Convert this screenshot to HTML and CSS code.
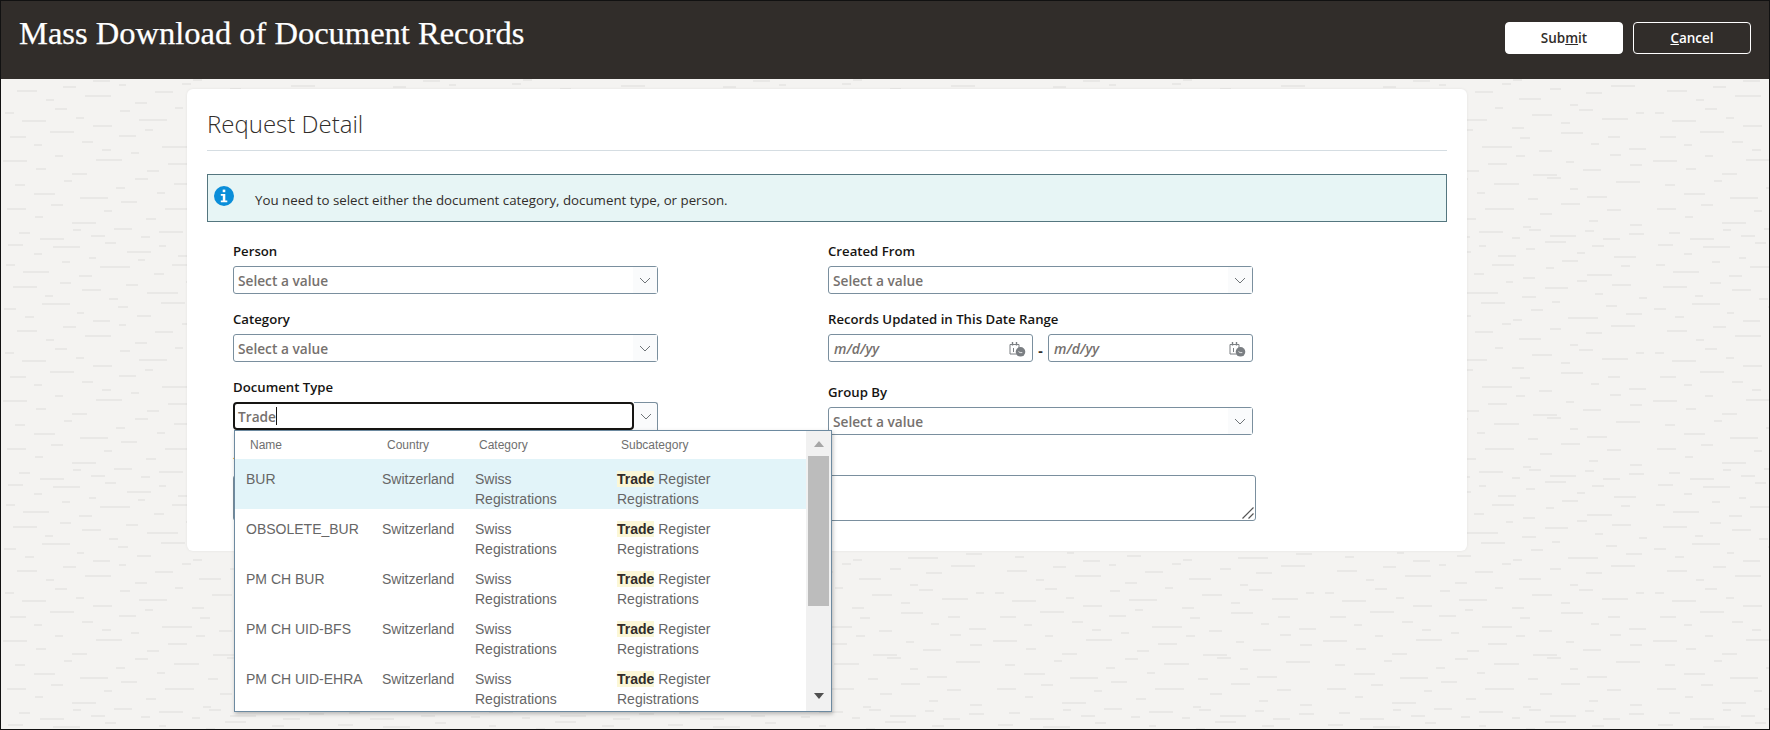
FILE: index.html
```html
<!DOCTYPE html>
<html lang="en">
<head>
<meta charset="utf-8">
<title>Mass Download of Document Records</title>
<link rel="stylesheet" href="styles.css">
</head>
<body>
<div class="frame">
  <header class="topbar">
    <h1 class="title">Mass Download of Document Records</h1>
    <div class="actions">
      <button class="btn btn-primary">Sub<u>m</u>it</button>
      <button class="btn btn-ghost"><u>C</u>ancel</button>
    </div>
  </header>
  <main class="stage">
    <section class="card">
      <h2 class="card-title">Request Detail</h2>
      <div class="notice">
        <svg class="notice-icon" viewBox="0 0 20 20" width="20" height="20"><circle cx="10" cy="10" r="10" fill="#0a8ed9"/><rect x="8.700" y="3.600" width="2.600" height="2.600" fill="#fff"/><path d="M6.800 8h4.500v6.400h2v1.800H6.800v-1.800h2V9.800h-2z" fill="#fff"/></svg>
        <span class="notice-text">You need to select either the document category, document type, or person.</span>
      </div>
      <div class="form">
        <div class="col">
          <div class="field">
            <label class="label">Person</label>
            <div class="select"><span class="placeholder">Select a value</span><span class="chev"><svg viewBox="0 0 12 7" width="12" height="7"><path d="M1 1l5 5 5-5" fill="none" stroke="#6f7478"/></svg></span></div>
          </div>
          <div class="field">
            <label class="label">Category</label>
            <div class="select"><span class="placeholder">Select a value</span><span class="chev"><svg viewBox="0 0 12 7" width="12" height="7"><path d="M1 1l5 5 5-5" fill="none" stroke="#6f7478"/></svg></span></div>
          </div>
          <div class="field">
            <label class="label">Document Type</label>
            <div class="combo">
              <div class="combo-input"><span class="typed">Trade</span><span class="caret"></span></div>
              <span class="combo-chev"><svg viewBox="0 0 12 7" width="12" height="7"><path d="M1 1l5 5 5-5" fill="none" stroke="#6f7478"/></svg></span>
              <div class="dropdown">
                <div class="list">
                  <div class="row head"><span class="c1">Name</span><span class="c2">Country</span><span class="c3">Category</span><span class="c4">Subcategory</span></div>
                  <div class="row item active"><span class="c1">BUR</span><span class="c2">Switzerland</span><span class="c3">Swiss Registrations</span><span class="c4"><b class="hit">Trade</b> Register Registrations</span></div>
                  <div class="row item"><span class="c1">OBSOLETE_BUR</span><span class="c2">Switzerland</span><span class="c3">Swiss Registrations</span><span class="c4"><b class="hit">Trade</b> Register Registrations</span></div>
                  <div class="row item"><span class="c1">PM CH BUR</span><span class="c2">Switzerland</span><span class="c3">Swiss Registrations</span><span class="c4"><b class="hit">Trade</b> Register Registrations</span></div>
                  <div class="row item"><span class="c1">PM CH UID-BFS</span><span class="c2">Switzerland</span><span class="c3">Swiss Registrations</span><span class="c4"><b class="hit">Trade</b> Register Registrations</span></div>
                  <div class="row item"><span class="c1">PM CH UID-EHRA</span><span class="c2">Switzerland</span><span class="c3">Swiss Registrations</span><span class="c4"><b class="hit">Trade</b> Register Registrations</span></div>
                </div>
                <div class="scrollbar">
                  <span class="arrow-up"></span>
                  <span class="thumb"></span>
                  <span class="arrow-down"></span>
                </div>
              </div>
            </div>
          </div>
        </div>
        <div class="col">
          <div class="field">
            <label class="label">Created From</label>
            <div class="select"><span class="placeholder">Select a value</span><span class="chev"><svg viewBox="0 0 12 7" width="12" height="7"><path d="M1 1l5 5 5-5" fill="none" stroke="#6f7478"/></svg></span></div>
          </div>
          <div class="field">
            <label class="label">Records Updated in This Date Range</label>
            <div class="dates">
              <div class="date"><span class="date-ph">m/d/yy</span>
                <svg class="cal" viewBox="0 0 17 16" width="17" height="16"><path d="M1 3.500h9v9.500H1z" fill="none" stroke="#7b7f83"/><path d="M3.500 1v3.500M7.500 1v3.500" stroke="#7b7f83" stroke-width="1.400"/><path d="M4.500 7v4" stroke="#7b7f83"/><circle cx="11.500" cy="10.800" r="4.800" fill="#7b7f83"/><path d="M9.500 10.600l1.600 1h2.200" fill="none" stroke="#fff" stroke-width=".8"/></svg>
              </div>
              <span class="dash">-</span>
              <div class="date"><span class="date-ph">m/d/yy</span>
                <svg class="cal" viewBox="0 0 17 16" width="17" height="16"><path d="M1 3.500h9v9.500H1z" fill="none" stroke="#7b7f83"/><path d="M3.500 1v3.500M7.500 1v3.500" stroke="#7b7f83" stroke-width="1.400"/><path d="M4.500 7v4" stroke="#7b7f83"/><circle cx="11.500" cy="10.800" r="4.800" fill="#7b7f83"/><path d="M9.500 10.600l1.600 1h2.200" fill="none" stroke="#fff" stroke-width=".8"/></svg>
              </div>
            </div>
          </div>
          <div class="field field-group">
            <label class="label">Group By</label>
            <div class="select"><span class="placeholder">Select a value</span><span class="chev"><svg viewBox="0 0 12 7" width="12" height="7"><path d="M1 1l5 5 5-5" fill="none" stroke="#6f7478"/></svg></span></div>
          </div>
        </div>
        <div class="field field-wide">
          <label class="label"><span class="req">*</span> Reason</label>
          <div class="textarea">
            <svg class="grip" viewBox="0 0 12 12" width="12" height="12"><path d="M.5 11.500L11.500.5M6.500 11.500L11.500 6.500" stroke="#555" stroke-width="1.200"/></svg>
          </div>
        </div>
      </div>
    </section>
  </main>
</div>
</body>
</html>
```

FILE: styles.css
```css
* { box-sizing: border-box; }
html, body { margin: 0; height: 100%; }
body {
  font-family: "Open Sans", "Noto Sans", sans-serif;
  background: #000;
  overflow: hidden;
}
.frame {
  width: 1770px;
  height: 730px;
  border: 1px solid #111;
  display: flex;
  flex-direction: column;
  background-color: #f4f3f1;
  background-image: url("data:image/svg+xml,%3Csvg xmlns='http://www.w3.org/2000/svg' width='330' height='240'%3E%3Cdefs%3E%3Cfilter id='b'%3E%3CfeGaussianBlur stdDeviation='.45'/%3E%3C/filter%3E%3C/defs%3E%3Cpath filter='url(%23b)' fill='none' stroke='%23e6e5e2' stroke-width='1.500' d='M7 4h15M33 13h8M52 6h27M88 17h7M104 2h11M126 11h24M158 5h7M177 15h18M205 8h9M224 1h21M256 12h8M271 5h12M293 16h22M5 24h9M22 31h26M61 21h8M78 35h13M99 26h30M137 19h7M153 33h10M171 24h22M202 37h12M225 27h8M241 20h16M266 34h25M300 25h9M12 46h24M44 55h8M59 42h11M81 49h19M108 58h9M125 44h12M146 52h31M185 41h7M201 56h14M224 47h23M256 40h10M274 53h8M291 44h19M318 57h8M3 68h12M24 76h9M41 63h28M76 72h7M92 80h17M117 66h10M136 75h14M160 62h24M192 79h9M210 69h12M231 61h8M247 77h30M285 65h11M305 73h16M16 90h20M45 99h8M62 86h13M84 95h26M118 84h7M134 102h12M154 91h18M181 83h9M198 98h22M229 88h11M249 104h8M265 92h16M290 85h24M4 112h9M21 120h24M54 108h12M75 117h8M92 125h19M119 110h10M138 119h28M174 107h8M191 127h12M211 114h20M240 122h9M258 109h14M281 118h26M315 112h8M9 136h16M33 144h8M49 131h24M81 141h11M101 149h9M118 135h17M144 129h8M161 146h30M199 137h10M218 150h13M240 132h22M270 143h8M287 136h12M308 148h17M2 160h24M35 168h10M54 155h8M71 173h15M95 159h26M130 152h8M146 170h12M167 163h19M195 155h9M212 174h24M245 161h8M262 169h18M289 154h11M309 164h12M14 184h10M33 193h21M63 180h8M79 197h28M115 187h9M134 178h13M156 192h8M173 183h25M207 198h10M226 177h14M249 188h8M266 196h20M295 181h24M6 208h19M34 216h8M50 204h12M71 222h24M103 210h8M120 201h16M145 218h10M164 208h29M202 226h8M219 213h12M240 203h19M268 220h9M286 209h14M309 224h12M18 232h11M39 238h24M72 229h8M90 235h14M113 228h18M140 236h9M158 231h24M191 237h8M208 229h12M229 235h26M264 230h9M282 238h17M308 233h15'/%3E%3C/svg%3E");
}
.topbar {
  height: 78px;
  flex: none;
  background: #312d2a;
  display: flex;
  justify-content: space-between;
  padding: 21px 18px 0 18px;
}
.title {
  margin: 0;
  font-family: "Liberation Serif", serif;
  font-weight: 400;
  font-size: 32.500px;
  line-height: 22px;
  color: #fff;
  -webkit-text-stroke: .25px #fff;
}
.actions { display: flex; gap: 10px; height: 32px; }
.btn {
  width: 118px;
  height: 32px;
  border-radius: 4px;
  font: 550 13.500px "Open Sans", sans-serif;
  padding: 0;
}
.btn-primary { background: #fff; border: 1px solid #fff; color: #312d2a; }
.btn-ghost { background: transparent; border: 1px solid #fff; color: #fff; }
.stage { flex: 1; min-height: 0; padding: 10px 0 0 186px; }
.card {
  width: 1280px;
  height: 462px;
  background: #fff;
  border-radius: 6px;
  box-shadow: 0 0 3px rgba(0,0,0,.07);
  padding: 20px 20px 0;
}
.card-title {
  margin: 0;
  height: 42px;
  font-size: 24px;
  font-weight: 300;
  line-height: 29px;
  color: #312d2a;
  border-bottom: 1px solid #d5dde2;
}
.notice {
  margin-top: 23px;
  height: 48px;
  background: #e7f5f5;
  border: 1px solid #54767f;
  display: flex;
  padding-left: 6px;
  font-size: 13.300px;
  line-height: 20px;
  color: #312d2a;
}
.notice-icon { margin: 11px 21px 0 0; flex: none; }
.notice-text { margin-top: 15px; }
.form {
  display: grid;
  grid-template-columns: 425px 425px;
  column-gap: 170px;
  padding: 16px 0 0 26px;
  align-items: start;
}
.col { display: flex; flex-direction: column; }
.field { display: flex; flex-direction: column; }
.col .field + .field { margin-top: 12px; }
.col .field-group { margin-top: 17px !important; }
.label {
  font-size: 13.200px;
  font-weight: 600;
  line-height: 20px;
  height: 28px;
  padding-top: 3px;
  color: #161513;
}
.select, .date, .textarea {
  border: 1px solid #7a8f9e;
  border-radius: 3px;
  height: 28px;
  background: #fff;
}
.select { display: flex; align-items: center; padding-left: 4px; }
.placeholder, .typed { font-size: 13.700px; font-weight: 600; color: #76716e; flex: 1; }
.typed { flex: none; }
.chev {
  width: 24px;
  height: 26px;
  background: #fafbfc;
  display: flex;
  align-items: center;
  justify-content: center;
}
.combo { display: flex; height: 28px; position: relative; }
.combo-input {
  width: 401px;
  height: 28px;
  border: 2px solid #161513;
  border-radius: 4px;
  display: flex;
  align-items: center;
  padding-left: 3px;
}
.caret { width: 1px; height: 18px; background: #161513; }
.combo-chev {
  width: 24px;
  height: 28px;
  border: 1px solid #7a8f9e;
  border-left: 0;
  border-bottom: 0;
  border-radius: 0 3px 0 0;
  background: #fafbfc;
  display: flex;
  align-items: center;
  justify-content: center;
}
.dates { display: flex; align-items: center; }
.date {
  width: 205px;
  display: flex;
  align-items: center;
  justify-content: space-between;
  padding: 0 6px 0 5px;
}
.date-ph { font-size: 14px; font-style: italic; font-weight: 600; color: #76716e; }
.cal { margin-top: 2px; }
.dash { width: 15px; text-align: center; font-weight: 700; font-size: 14px; color: #312d2a; margin-top: 4px; }
.field-wide { grid-column: 1 / 3; width: 1023px; margin-top: 16px; }
.field-wide .label { height: 24px; padding-top: 0; }
.req { color: #c76a1a; }
.textarea { height: 46px; position: relative; }
.grip { position: absolute; right: 1px; bottom: 1px; }
.dropdown {
  position: absolute;
  left: 1px;
  top: 28px;
  width: 598px;
  height: 282px;
  z-index: 10;
  background: #fff;
  border: 1px solid #6d8aa0;
  box-shadow: 1px 2px 4px rgba(0,0,0,.25);
  display: flex;
  overflow: hidden;
  font-family: "Liberation Sans", Arial, sans-serif;
}
.list { width: 571px; flex: none; overflow: hidden; }
.row {
  display: grid;
  grid-template-columns: 136px 93px 142px 1fr;
  padding-left: 11px;
  color: #666;
}
.head {
  height: 28px;
  font-size: 12px;
  align-items: center;
  padding-left: 15px;
  grid-template-columns: 137px 92px 142px 1fr;
  color: #6f6f6f;
}
.item { height: 50px; font-size: 14px; line-height: 20px; padding-top: 10px; }
.active { background: #e2f4f9; }
.c3 { width: 100px; }
.c4 { width: 110px; }
.hit {
  font-weight: 700;
  color: #312d2a;
  background: #fbf7d7;
}
.scrollbar {
  width: 25px;
  flex: none;
  background: #f1f1f1;
  display: flex;
  flex-direction: column;
  align-items: center;
}
.arrow-up {
  margin-top: 10px;
  width: 0; height: 0;
  border: 5.500px solid transparent;
  border-top: 0;
  border-bottom: 6px solid #a6a6a6;
}
.thumb { width: 21px; height: 150px; background: #bcbcbc; margin-top: 9px; }
.arrow-down {
  margin-top: 87px;
  width: 0; height: 0;
  border: 5.500px solid transparent;
  border-bottom: 0;
  border-top: 6px solid #505050;
}
```
